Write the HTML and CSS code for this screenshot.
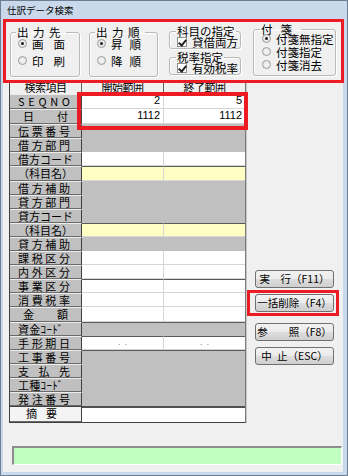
FILE: index.html
```html
<!DOCTYPE html>
<html lang="ja">
<head>
    <meta charset="UTF-8">
    <title>仕訳データ検索</title>
    <link rel="stylesheet" href="styles.css">
</head>
<body>
<div class="window">
    <div class="titlebar">仕訳データ検索</div>
    <div class="client">
        <div class="options">
            <fieldset class="group g-dest">
                <legend class="wide">出力先</legend>
                <div class="opt"><span class="radio on"></span><span class="sp10">画面</span></div>
                <div class="opt"><span class="radio"></span><span class="sp10">印刷</span></div>
            </fieldset>
            <fieldset class="group g-order">
                <legend class="wide">出力順</legend>
                <div class="opt"><span class="radio on"></span><span class="sp7">昇順</span></div>
                <div class="opt"><span class="radio"></span><span class="sp7">降順</span></div>
            </fieldset>
            <div class="g-col">
                <fieldset class="group g-small">
                    <legend>科目の指定</legend>
                    <div class="opt"><span class="check on"></span><span>貸借両方</span></div>
                </fieldset>
                <fieldset class="group g-small">
                    <legend>税率指定</legend>
                    <div class="opt"><span class="check on"></span><span>有効税率</span></div>
                </fieldset>
            </div>
            <fieldset class="group g-tag">
                <legend class="wider">付箋</legend>
                <div class="opt"><span class="radio on"></span><span>付箋無指定</span></div>
                <div class="opt"><span class="radio"></span><span>付箋指定</span></div>
                <div class="opt"><span class="radio"></span><span>付箋消去</span></div>
            </fieldset>
        </div>

        <div class="main">
            <div class="grid">
                <div class="row head">
                    <div class="hcell">検索項目</div><div class="hcell">開始範囲</div><div class="hcell">終了範囲</div>
                </div>
                <div class="row tall"><div class="lbl">S E Q N O</div><div class="cell num">2</div><div class="cell num">5</div></div>
                <div class="row tall"><div class="lbl pad-wide">日付</div><div class="cell num">1112</div><div class="cell num">1112</div></div>
                <div class="row"><div class="lbl">伝票番号</div><div class="fill gray"></div></div>
                <div class="row"><div class="lbl">借方部門</div><div class="fill gray"></div></div>
                <div class="row"><div class="lbl">借方コード</div><div class="cell"></div><div class="cell"></div></div>
                <div class="row tall sep"><div class="lbl">（科目名）</div><div class="cell yellow"></div><div class="cell yellow"></div></div>
                <div class="row"><div class="lbl">借方補助</div><div class="fill gray"></div></div>
                <div class="row"><div class="lbl">貸方部門</div><div class="fill gray"></div></div>
                <div class="row"><div class="lbl">貸方コード</div><div class="fill gray"></div></div>
                <div class="row sep"><div class="lbl">（科目名）</div><div class="cell yellow"></div><div class="cell yellow"></div></div>
                <div class="row"><div class="lbl">貸方補助</div><div class="fill gray"></div></div>
                <div class="row"><div class="lbl">課税区分</div><div class="cell"></div><div class="cell"></div></div>
                <div class="row"><div class="lbl">内外区分</div><div class="cell"></div><div class="cell"></div></div>
                <div class="row sep"><div class="lbl">事業区分</div><div class="cell"></div><div class="cell"></div></div>
                <div class="row"><div class="lbl">消費税率</div><div class="cell"></div><div class="cell"></div></div>
                <div class="row tall"><div class="lbl pad-wide">金額</div><div class="cell"></div><div class="cell"></div></div>
                <div class="row sep"><div class="lbl narrow">資金ｺｰﾄﾞ</div><div class="fill gray"></div></div>
                <div class="row sep"><div class="lbl">手形期日</div><div class="cell dots">.&nbsp;&nbsp;.</div><div class="cell dots">.&nbsp;&nbsp;.</div></div>
                <div class="row sep"><div class="lbl">工事番号</div><div class="fill gray"></div></div>
                <div class="row"><div class="lbl">支払先</div><div class="fill gray"></div></div>
                <div class="row"><div class="lbl narrow">工種ｺｰﾄﾞ</div><div class="fill gray"></div></div>
                <div class="row"><div class="lbl">発注番号</div><div class="fill gray"></div></div>
                <div class="row memo sep"><div class="lbl light pad-memo">摘要</div><div class="fill white"></div></div>
            </div>

            <div class="buttons">
                <button class="btn" type="button">実　行（F11）</button>
                <button class="btn" type="button">一括削除（F4）</button>
                <button class="btn" type="button">参　　照（F8）</button>
                <button class="btn" type="button">中&ensp;止（ESC）</button>
            </div>
        </div>

        <div class="status"></div>
    </div>

    <div class="mark mark-options"></div>
    <div class="mark mark-range"></div>
    <div class="mark mark-button"></div>
</div>
</body>
</html>
```

FILE: styles.css
```css
* {
    box-sizing: border-box;
}

html, body {
    margin: 0;
    padding: 0;
}

body {
    width: 348px;
    height: 476px;
    overflow: hidden;
    font-family: "Noto Sans CJK JP", "Liberation Sans", sans-serif;
    font-size: 11px;
    color: #000;
    background: #c8d8ea;
}

.window {
    position: relative;
    width: 348px;
    height: 476px;
    display: flex;
    flex-direction: column;
    background: #c9d9eb;
    border: 1px solid #6d7e92;
    padding: 0 4px 3px 2px;
}

.titlebar {
    height: 18px;
    line-height: 19px;
    padding-left: 4px;
    font-size: 9.5px;
    color: #000;
}

.client {
    flex: 1;
    background: #f0f0f0;
    padding-left: 6px;
    border: 0;
}

/* top option groups */
.options {
    display: flex;
    align-items: flex-start;
    height: 61px;
}

.group {
    margin: 0;
    padding: 0 0 0 5px;
    min-width: 0;
    border: 1px solid #b9b9b9;
    border-radius: 3px;
    box-shadow: inset 1px 1px 0 #fff, 1px 1px 0 #fff;
    font-size: 11.5px;
}

.group legend {
    padding: 0 1px;
    font-size: 11.5px;
    line-height: 12px;
}

.group legend.wide {
    letter-spacing: 4.5px;
}

.group legend.wider {
    letter-spacing: 8px;
}

.g-dest {
    margin: 7px 0 0 1px;
    width: 70px;
    height: 51px;
}

.g-order {
    margin: 7px 0 0 9px;
    width: 69px;
    height: 51px;
}

.g-dest .opt,
.g-order .opt {
    height: 17px;
}

.g-dest .opt:first-of-type,
.g-order .opt:first-of-type {
    margin-top: -3px;
}

.g-col {
    display: flex;
    flex-direction: column;
    gap: 2px;
    margin: 6px 0 0 11px;
    width: 72px;
}

.g-small {
    height: 24px;
}

.g-small legend {
    margin-left: 1px;
}

.g-small .opt {
    margin-top: -1px;
    height: 11px;
}

.g-tag {
    margin: 4px 0 0 12px;
    width: 83px;
    height: 53px;
    padding-left: 6px;
}

.g-tag legend {
    margin-left: 0;
}

.g-tag .opt {
    height: 13px;
}

.g-tag .opt:first-of-type {
    margin-top: -3px;
}

.opt {
    display: flex;
    align-items: center;
    gap: 5px;
    padding-left: 2px;
    line-height: 12px;
    white-space: nowrap;
}

.sp10 {
    letter-spacing: 10px;
}

.sp7 {
    letter-spacing: 7px;
}

.radio {
    width: 9px;
    height: 9px;
    border-radius: 50%;
    border: 1px solid #9a9b9b;
    background: radial-gradient(circle, #f6f6f6 0%, #e0e0e0 100%);
    display: flex;
    align-items: center;
    justify-content: center;
    flex: none;
}

.radio.on::after {
    content: "";
    width: 3px;
    height: 3px;
    border-radius: 50%;
    background: #1a1a1a;
}

.check {
    width: 10px;
    height: 10px;
    border: 1px solid #8e8f8f;
    background: #fff;
    flex: none;
    position: relative;
}

.check.on::after {
    content: "";
    position: absolute;
    left: 2px;
    top: 0;
    width: 3px;
    height: 6px;
    border: solid #222;
    border-width: 0 2px 2px 0;
    transform: rotate(40deg);
}

/* table and buttons */
.main {
    display: flex;
    align-items: flex-start;
}

.grid {
    width: 237px;
    border-left: 1px solid #404040;
    border-right: 1px solid #7a7a7a;
    border-bottom: 1px solid #404040;
    box-shadow: 1px 0 0 #c8c8c8;
}

.row {
    display: grid;
    grid-template-columns: 72px 82px 81px;
    height: 14px;
}

.row.tall {
    height: 15px;
}

.row.head {
    height: 14px;
}

.row.memo {
    height: 16px;
}

.hcell {
    background: #f0f0f0;
    border-right: 1px solid #606060;
    border-bottom: 1px solid #808080;
    text-align: center;
    font-size: 11px;
    line-height: 14px;
    letter-spacing: -0.5px;
}

.hcell:last-child {
    border-right: 0;
}

.lbl {
    background: #c0c0c0;
    border-top: 1px solid #ececec;
    border-bottom: 1px solid #6a6a6a;
    border-right: 1px solid #404040;
    padding: 0 11px 0 8px;
    font-size: 11px;
    line-height: 12px;
    text-align: justify;
    text-align-last: justify;
    white-space: nowrap;
    overflow: hidden;
}

.lbl.pad-wide {
    padding: 0 13px 0 13px;
}

.lbl.pad-memo {
    padding: 0 24px 0 16px;
}

.lbl.narrow {
    text-align-last: left;
    padding-left: 8px;
    letter-spacing: 0.3px;
}

.lbl.light {
    background: #f4f4f4;
    border-top: 1px solid #404040;
}

.cell {
    background: #fff;
    border-right: 1px solid #d6d6d6;
    border-bottom: 1px solid #d6d6d6;
    line-height: 13px;
    font-family: "Liberation Sans", sans-serif;
    font-size: 11px;
}

.cell:last-child {
    border-right: 0;
}

.cell.num {
    text-align: right;
    padding-right: 3px;
}

.cell.yellow {
    background: #ffffc4;
}

.cell.dots {
    text-align: center;
    font-size: 8px;
    line-height: 12px;
    color: #444;
}

.fill {
    grid-column: span 2;
}

.fill.gray {
    background: #c0c0c0;
}

.fill.white {
    background: #fff;
}

.row.sep .cell,
.row.sep .fill {
    border-top: 1px solid #5a5a5a;
}

.row.memo .fill {
    border-top: 2px solid #505050;
}

.buttons {
    display: flex;
    flex-direction: column;
    gap: 6px;
    margin-left: 9px;
    padding-top: 190px;
}

.btn {
    width: 79px;
    height: 18px;
    padding: 0;
    border: 1px solid #707070;
    border-radius: 3px;
    background: linear-gradient(#f2f2f2 0%, #ebebeb 50%, #dddddd 51%, #cfcfcf 100%);
    font-family: "Noto Sans CJK JP", "Liberation Sans", sans-serif;
    font-size: 10.5px;
    line-height: 16px;
    color: #000;
    white-space: nowrap;
}

.btn:nth-child(3) {
    margin-top: 5px;
}

.status {
    margin: 23px 1px 0 3px;
    height: 19px;
    background: #c0ffc0;
    border-top: 2px solid #8c8c8c;
    border-left: 2px solid #8c8c8c;
    border-right: 1px solid #ffffff;
    border-bottom: 1px solid #ffffff;
}

/* red annotation frames laid over the form */
.mark {
    position: absolute;
    border: 3px solid #ed1c24;
    pointer-events: none;
}

.mark-options {
    left: 2px;
    top: 18px;
    width: 341px;
    height: 64px;
}

.mark-range {
    left: 76px;
    top: 91px;
    width: 171px;
    height: 38px;
    border-width: 4px;
}

.mark-button {
    left: 246px;
    top: 289px;
    width: 92px;
    height: 26px;
}
```
